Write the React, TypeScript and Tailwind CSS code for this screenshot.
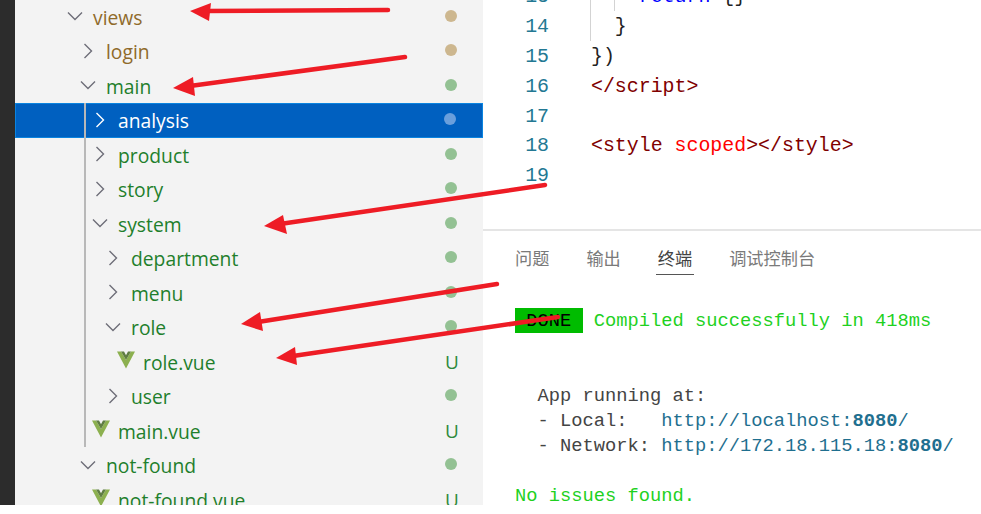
import React from "react";

type Row = {
  name: string;
  pad: string;
  kind: "open" | "closed" | "vue";
  tone: "brown" | "green" | "sel";
  status: "dot" | "U";
};

const rows: Row[] = [
  { name: "views", pad: "pl-[51px]", kind: "open", tone: "brown", status: "dot" },
  { name: "login", pad: "pl-[64px]", kind: "closed", tone: "brown", status: "dot" },
  { name: "main", pad: "pl-[64px]", kind: "open", tone: "green", status: "dot" },
  { name: "analysis", pad: "pl-[75px]", kind: "closed", tone: "sel", status: "dot" },
  { name: "product", pad: "pl-[76px]", kind: "closed", tone: "green", status: "dot" },
  { name: "story", pad: "pl-[76px]", kind: "closed", tone: "green", status: "dot" },
  { name: "system", pad: "pl-[76px]", kind: "open", tone: "green", status: "dot" },
  { name: "department", pad: "pl-[89px]", kind: "closed", tone: "green", status: "dot" },
  { name: "menu", pad: "pl-[89px]", kind: "closed", tone: "green", status: "dot" },
  { name: "role", pad: "pl-[89px]", kind: "open", tone: "green", status: "dot" },
  { name: "role.vue", pad: "pl-[101px]", kind: "vue", tone: "green", status: "U" },
  { name: "user", pad: "pl-[89px]", kind: "closed", tone: "green", status: "dot" },
  { name: "main.vue", pad: "pl-[76px]", kind: "vue", tone: "green", status: "U" },
  { name: "not-found", pad: "pl-[64px]", kind: "open", tone: "green", status: "dot" },
  { name: "not-found.vue", pad: "pl-[76px]", kind: "vue", tone: "green", status: "U" },
];

function Icon({ kind, sel }: { kind: Row["kind"]; sel: boolean }) {
  if (kind === "vue") {
    return (
      <svg width="18" height="18" viewBox="0 0 18 18" className="shrink-0 -mt-[4px] ml-[1px] mr-[7px]">
        <path d="M0 0.5H4L9 9L14 0.5H18L9 17.5Z" fill="#8cb04f" />
        <path d="M4 0.5H7L9 4.2L11 0.5H14L9 9Z" fill="#5f7d42" />
      </svg>
    );
  }
  const stroke = sel ? "#ffffff" : "#6e6e78";
  return (
    <svg width="18" height="18" viewBox="0 0 18 18" fill="none" className="shrink-0 mr-[8px] -mt-[1px]">
      {kind === "closed" ? (
        <path d="M5.5 2L12.5 9L5.5 16" stroke={stroke} strokeWidth="1.4" />
      ) : (
        <path d="M2 5.5L9 12.5L16 5.5" stroke={stroke} strokeWidth="1.4" />
      )}
    </svg>
  );
}

function TreeRow({ row }: { row: Row }) {
  const sel = row.tone === "sel";
  const text = sel ? "text-white" : row.tone === "brown" ? "text-[#8f6a2a]" : "text-[#1f7f2c]";
  const dot = sel ? "bg-[#6a9fdc]" : row.tone === "brown" ? "bg-[#cdb78f]" : "bg-[#93c193]";
  return (
    <div
      className={`h-[34.5px] flex items-center pr-[26px] ${row.pad} ${
        sel ? "bg-[#0060c0] border border-[#0a84e0]" : ""
      }`}
    >
      <Icon kind={row.kind} sel={sel} />
      <span className={`${text} text-[19.3px] leading-none flex-1 whitespace-nowrap font-["Open_Sans",sans-serif] pl-[1px] pt-[1px]`}>
        {row.name}
      </span>
      {row.status === "dot" ? (
        <span className={`w-[12px] h-[12px] rounded-full ${dot} -mt-[2px]`} />
      ) : (
        <span className="text-[#2f8a3c] text-[19px] leading-none w-[12px] flex justify-center font-['Open_Sans',sans-serif] -mr-[1px] pt-[1px]">
          U
        </span>
      )}
    </div>
  );
}

function CodeLine({ n, children }: { n: number; children?: React.ReactNode }) {
  return (
    <div className="h-[29.9px] flex items-center">
      <span className="w-[66px] text-right text-[#237893] shrink-0">{n}</span>
      <span className="pl-[42px] whitespace-pre">{children}</span>
    </div>
  );
}

const Tag = ({ children }: { children: React.ReactNode }) => <span className="text-[#800000]">{children}</span>;

function Arrows() {
  const list = [
    { line: "M388 10L205 11", head: "190,11 211,3 209,21" },
    { line: "M405 57L190 86", head: "173,88 193,77 195,96" },
    { line: "M545 185L280 224", head: "264,226 283,215 287,234" },
    { line: "M497 284L258 322", head: "241,324 260,312 263,331" },
    { line: "M558 317L293 356", head: "276,358 295,347 297,365" },
  ];
  return (
    <svg width="981" height="514" className="absolute inset-0 pointer-events-none">
      {list.map((a) => (
        <g key={a.head}>
          <path d={a.line} stroke="#ee1c25" strokeWidth="4.5" strokeLinecap="round" fill="none" />
          <polygon points={a.head} fill="#ee1c25" />
        </g>
      ))}
    </svg>
  );
}

export default function App() {
  return (
    <div className="relative w-[981px] h-[514px] overflow-hidden bg-white flex items-start">
      <div className="w-[15px] h-[505px] bg-[#2c2c2c] shrink-0" />
      <div className="relative w-[468px] h-[505px] bg-[#f3f3f3] shrink-0 overflow-hidden">
        <div className="-mt-[0.5px]">
          {rows.map((r) => (
            <TreeRow key={r.name} row={r} />
          ))}
        </div>
        <div className="absolute left-[69px] top-[103px] w-[2px] h-[344px] bg-[#b8b8b8]" />
      </div>
      <div className="relative flex-1 h-[514px] flex flex-col font-['Liberation_Mono',monospace]">
        <div className="relative h-[229px] shrink-0 overflow-hidden text-[19.9px] text-[#222]">
          <div className="-mt-[18px]">
            <CodeLine n={13}>
              <span className="text-[#0000ff]">{"    return"}</span> {"{}"}
            </CodeLine>
            <CodeLine n={14}>{"  }"}</CodeLine>
            <CodeLine n={15}>{"})"}</CodeLine>
            <CodeLine n={16}>
              <Tag>{"</script>"}</Tag>
            </CodeLine>
            <CodeLine n={17} />
            <CodeLine n={18}>
              <Tag>{"<style "}</Tag>
              <span className="text-[#ff0000]">scoped</span>
              <Tag>{"></style>"}</Tag>
            </CodeLine>
            <CodeLine n={19} />
          </div>
          <div className="absolute left-[107px] top-0 w-[1px] h-[41px] bg-[#d3d3d3]" />
          <div className="absolute left-[131px] top-0 w-[1px] h-[11px] bg-[#d3d3d3]" />
        </div>
        <div className="h-[2px] bg-[#e5e5e5] shrink-0" />
        <div className="flex pl-[32px] pt-[17px] gap-[37px] text-[17.2px] leading-[20px] text-[#7a7a7a] font-['Noto_Sans_CJK_SC',sans-serif]">
          <span>问题</span>
          <span>输出</span>
          <span className="text-[#424242] border-b border-[#555] pb-[6px] -mx-[2px] px-[2px]">终端</span>
          <span>调试控制台</span>
        </div>
        <div className="pl-[32px] mt-[33px] text-[18.75px] leading-[25px] whitespace-pre text-[#444]">
          <div className="h-[25px] flex items-center">
            <span className="bg-[#00bc00] text-black h-[25px] pt-[1px]">{" DONE "}</span>
            <span className="text-[#1fd11f] pt-[1px]">{" Compiled successfully in 418ms"}</span>
          </div>
          <div className="h-[51px]" />
          <div>{"  App running at:"}</div>
          <div>
            {"  - Local:   "}
            <span className="text-[#1f6f8f]">
              http://localhost:<b>8080</b>/
            </span>
          </div>
          <div>
            {"  - Network: "}
            <span className="text-[#1f6f8f]">
              http://172.18.115.18:<b>8080</b>/
            </span>
          </div>
          <div className="h-[25px]" />
          <div className="text-[#1fd11f]">No issues found.</div>
        </div>
      </div>
      <Arrows />
    </div>
  );
}
